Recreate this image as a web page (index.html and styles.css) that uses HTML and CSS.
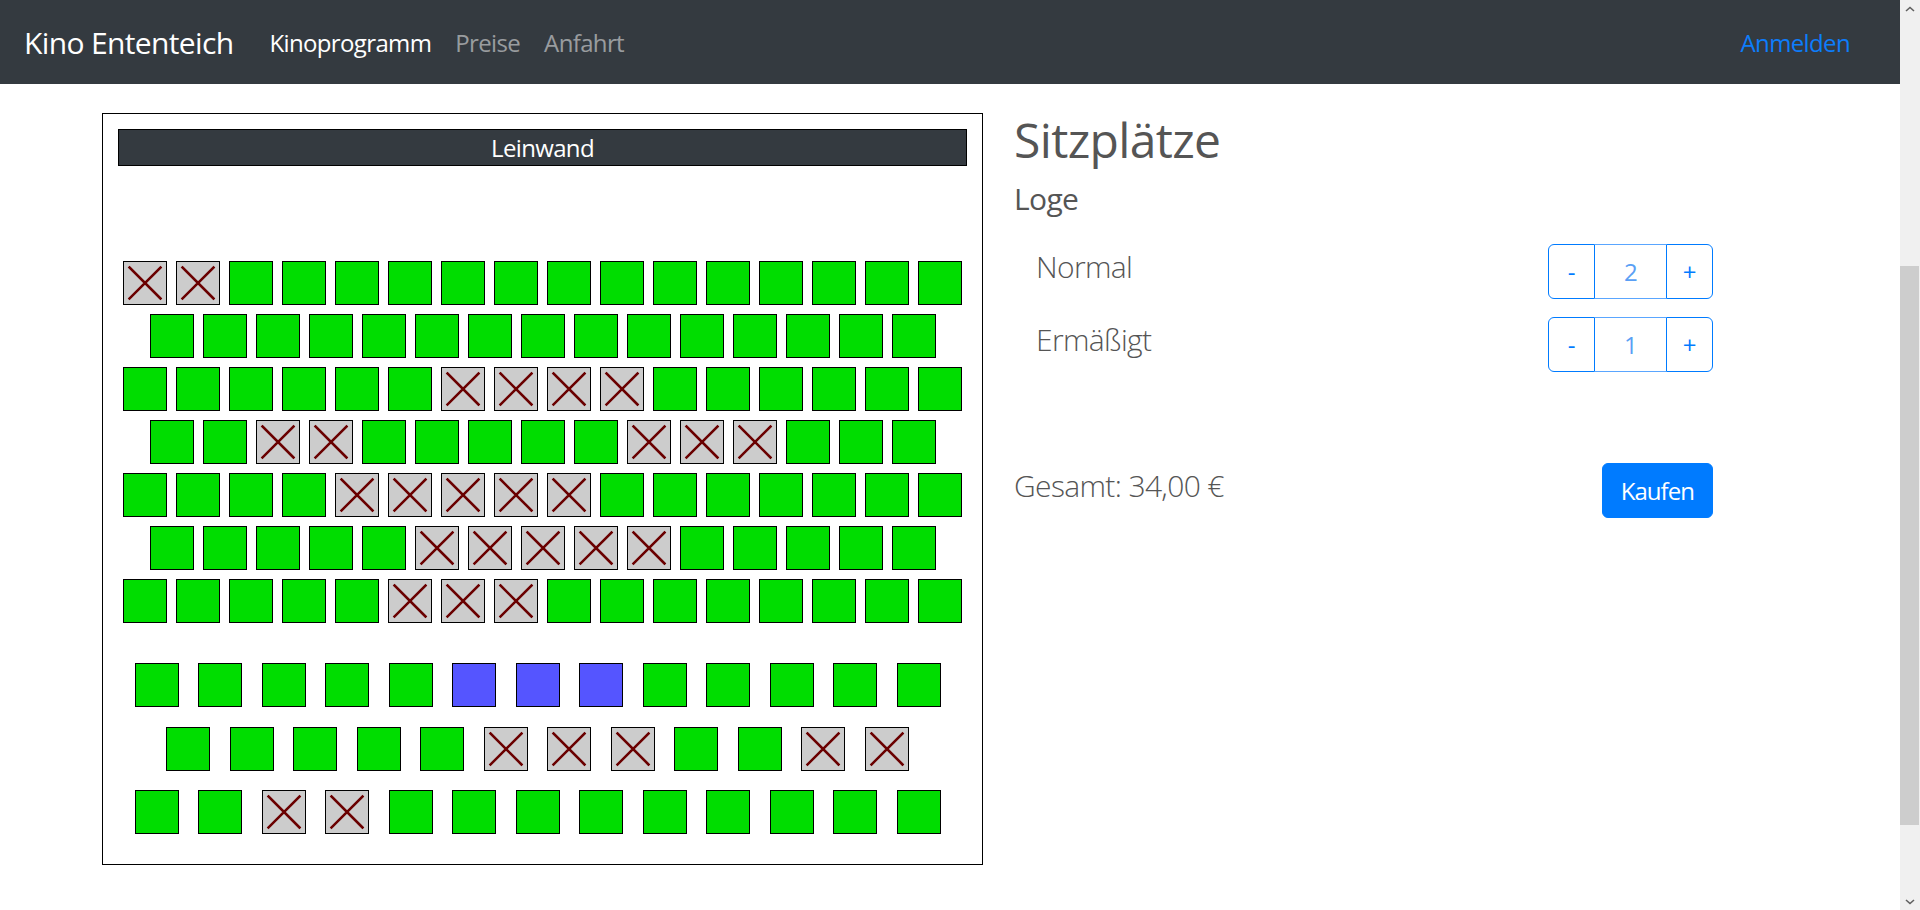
FILE: index.html
```html
<!DOCTYPE html>
<html lang="de">
<head>
<meta charset="utf-8">
<title>Kino Ententeich</title>
<link rel="stylesheet" href="styles.css">
</head>
<body>
<svg class="defs" width="0" height="0" aria-hidden="true">
  <symbol id="xm" viewBox="0 0 42 42"><path d="M5.5 5.5L36.5 36.5M36.5 5.5L5.5 36.5"/></symbol>
</svg>
<div class="page">
  <nav class="navbar">
    <a class="brand">Kino Ententeich</a>
    <a class="nav-link active">Kinoprogramm</a>
    <a class="nav-link">Preise</a>
    <a class="nav-link">Anfahrt</a>
    <a class="nav-login">Anmelden</a>
  </nav>
  <main class="main">
    <section class="plan">
      <div class="screen">Leinwand</div>
      <div class="parkett">
        <div class="prow">
          <span class="seat taken"><svg><use href="#xm"/></svg></span><span class="seat taken"><svg><use href="#xm"/></svg></span><span class="seat"></span><span class="seat"></span><span class="seat"></span><span class="seat"></span><span class="seat"></span><span class="seat"></span><span class="seat"></span><span class="seat"></span><span class="seat"></span><span class="seat"></span><span class="seat"></span><span class="seat"></span><span class="seat"></span><span class="seat"></span>
        </div>
        <div class="prow">
          <span class="seat"></span><span class="seat"></span><span class="seat"></span><span class="seat"></span><span class="seat"></span><span class="seat"></span><span class="seat"></span><span class="seat"></span><span class="seat"></span><span class="seat"></span><span class="seat"></span><span class="seat"></span><span class="seat"></span><span class="seat"></span><span class="seat"></span>
        </div>
        <div class="prow">
          <span class="seat"></span><span class="seat"></span><span class="seat"></span><span class="seat"></span><span class="seat"></span><span class="seat"></span><span class="seat taken"><svg><use href="#xm"/></svg></span><span class="seat taken"><svg><use href="#xm"/></svg></span><span class="seat taken"><svg><use href="#xm"/></svg></span><span class="seat taken"><svg><use href="#xm"/></svg></span><span class="seat"></span><span class="seat"></span><span class="seat"></span><span class="seat"></span><span class="seat"></span><span class="seat"></span>
        </div>
        <div class="prow">
          <span class="seat"></span><span class="seat"></span><span class="seat taken"><svg><use href="#xm"/></svg></span><span class="seat taken"><svg><use href="#xm"/></svg></span><span class="seat"></span><span class="seat"></span><span class="seat"></span><span class="seat"></span><span class="seat"></span><span class="seat taken"><svg><use href="#xm"/></svg></span><span class="seat taken"><svg><use href="#xm"/></svg></span><span class="seat taken"><svg><use href="#xm"/></svg></span><span class="seat"></span><span class="seat"></span><span class="seat"></span>
        </div>
        <div class="prow">
          <span class="seat"></span><span class="seat"></span><span class="seat"></span><span class="seat"></span><span class="seat taken"><svg><use href="#xm"/></svg></span><span class="seat taken"><svg><use href="#xm"/></svg></span><span class="seat taken"><svg><use href="#xm"/></svg></span><span class="seat taken"><svg><use href="#xm"/></svg></span><span class="seat taken"><svg><use href="#xm"/></svg></span><span class="seat"></span><span class="seat"></span><span class="seat"></span><span class="seat"></span><span class="seat"></span><span class="seat"></span><span class="seat"></span>
        </div>
        <div class="prow">
          <span class="seat"></span><span class="seat"></span><span class="seat"></span><span class="seat"></span><span class="seat"></span><span class="seat taken"><svg><use href="#xm"/></svg></span><span class="seat taken"><svg><use href="#xm"/></svg></span><span class="seat taken"><svg><use href="#xm"/></svg></span><span class="seat taken"><svg><use href="#xm"/></svg></span><span class="seat taken"><svg><use href="#xm"/></svg></span><span class="seat"></span><span class="seat"></span><span class="seat"></span><span class="seat"></span><span class="seat"></span>
        </div>
        <div class="prow">
          <span class="seat"></span><span class="seat"></span><span class="seat"></span><span class="seat"></span><span class="seat"></span><span class="seat taken"><svg><use href="#xm"/></svg></span><span class="seat taken"><svg><use href="#xm"/></svg></span><span class="seat taken"><svg><use href="#xm"/></svg></span><span class="seat"></span><span class="seat"></span><span class="seat"></span><span class="seat"></span><span class="seat"></span><span class="seat"></span><span class="seat"></span><span class="seat"></span>
        </div>
      </div>
      <div class="balcony">
        <div class="brow">
          <span class="seat"></span><span class="seat"></span><span class="seat"></span><span class="seat"></span><span class="seat"></span><span class="seat sel"></span><span class="seat sel"></span><span class="seat sel"></span><span class="seat"></span><span class="seat"></span><span class="seat"></span><span class="seat"></span><span class="seat"></span>
        </div>
        <div class="brow">
          <span class="seat"></span><span class="seat"></span><span class="seat"></span><span class="seat"></span><span class="seat"></span><span class="seat taken"><svg><use href="#xm"/></svg></span><span class="seat taken"><svg><use href="#xm"/></svg></span><span class="seat taken"><svg><use href="#xm"/></svg></span><span class="seat"></span><span class="seat"></span><span class="seat taken"><svg><use href="#xm"/></svg></span><span class="seat taken"><svg><use href="#xm"/></svg></span>
        </div>
        <div class="brow">
          <span class="seat"></span><span class="seat"></span><span class="seat taken"><svg><use href="#xm"/></svg></span><span class="seat taken"><svg><use href="#xm"/></svg></span><span class="seat"></span><span class="seat"></span><span class="seat"></span><span class="seat"></span><span class="seat"></span><span class="seat"></span><span class="seat"></span><span class="seat"></span><span class="seat"></span>
        </div>
      </div>
    </section>
    <section class="order">
      <h2 class="title">Sitzplätze</h2>
      <h5 class="category">Loge</h5>
      <div class="qty-row">
        <span class="lead">Normal</span>
        <div class="qty">
          <button class="qty-btn">-</button>
          <span class="qty-val">2</span>
          <button class="qty-btn">+</button>
        </div>
      </div>
      <div class="qty-row">
        <span class="lead">Ermäßigt</span>
        <div class="qty">
          <button class="qty-btn">-</button>
          <span class="qty-val">1</span>
          <button class="qty-btn">+</button>
        </div>
      </div>
      <div class="total-row">
        <span class="lead total">Gesamt: 34,00 €</span>
        <button class="buy">Kaufen</button>
      </div>
    </section>
  </main>
</div>
<div class="scrollbar">
  <div class="sb-btn"><svg width="10" height="6" viewBox="0 0 10 6"><path d="M1 5L5 1.5L9 5"/></svg></div>
  <div class="sb-track"><div class="sb-thumb"></div></div>
  <div class="sb-btn"><svg width="10" height="6" viewBox="0 0 10 6"><path d="M1 1L5 4.5L9 1"/></svg></div>
</div>
</body>
</html>
```

FILE: styles.css
```css
* { box-sizing: border-box; }

html, body { margin: 0; padding: 0; }

body {
  width: 1920px;
  height: 910px;
  overflow: hidden;
  display: flex;
  background: #fff;
  font-family: "Open Sans", "Noto Sans", sans-serif;
  color: #555;
  letter-spacing: -0.04em;
}

.defs { position: absolute; }

.page { flex: 1; min-width: 0; }

/* navbar */
.navbar {
  height: 84px;
  background: #343a40;
  display: flex;
  align-items: center;
  padding: 0 24px;
}
.brand { font-size: 30px; color: #fff; margin-right: 24px; }
.nav-link { font-size: 24px; padding: 0 12px; color: rgba(255,255,255,.5); }
.nav-link.active { color: #fff; }
.nav-login { margin-left: auto; font-size: 24px; color: #0d7dfb; padding-right: 26px; }

/* main */
.main {
  display: flex;
  gap: 31px;
  padding: 29px 0 0 102px;
}

.plan {
  width: 881px;
  height: 752px;
  border: 1px solid #000;
  padding: 15px;
  display: flex;
  flex-direction: column;
}
.screen {
  height: 37px;
  border: 1px solid #000;
  background: #343a40;
  color: #fff;
  text-align: center;
  font-size: 24px;
  line-height: 36px;
}
.parkett {
  margin-top: 95px;
  display: flex;
  flex-direction: column;
  gap: 9px;
}
.prow { display: flex; justify-content: center; gap: 9px; }
.balcony {
  margin-top: 40px;
  padding-right: 10px;
  display: flex;
  flex-direction: column;
  gap: 19.5px;
}
.brow { display: flex; justify-content: center; gap: 19.5px; }

.seat {
  width: 44px;
  height: 44px;
  flex: none;
  border: 1px solid #000;
  background: #00dd00;
  display: block;
}
.seat.taken { background: #cccccc; }
.seat.sel { background: #5555ff; }
.seat svg {
  display: block;
  width: 42px;
  height: 42px;
  stroke: #6a0000;
  stroke-width: 2.5;
  stroke-linecap: square;
  fill: none;
}

/* order column */
.order { width: 699px; }
.title {
  font-size: 48px;
  font-weight: 400;
  line-height: 1.2;
  margin: -2px 0 12px;
}
.category {
  font-size: 30px;
  font-weight: 500;
  line-height: 1.2;
  margin: 0 0 27.5px;
}
.lead { font-size: 30px; font-weight: 300; line-height: 45px; }
.qty-row {
  display: flex;
  justify-content: space-between;
  align-items: flex-start;
  padding-left: 22px;
  margin-bottom: 18px;
}
.qty { display: flex; height: 55px; }
.qty-btn {
  width: 47px;
  height: 55px;
  border: 1px solid #007bff;
  background: #fff;
  color: #007bff;
  font-family: inherit;
  font-size: 24px;
  padding: 0;
}
.qty-btn:first-child { border-radius: 6px 0 0 6px; }
.qty-btn:last-child { border-radius: 0 6px 6px 0; }
.qty-val {
  width: 71px;
  height: 55px;
  border-top: 1px solid #5aa6ff;
  border-bottom: 1px solid #5aa6ff;
  color: #5a9ff5;
  font-size: 24px;
  display: flex;
  align-items: center;
  justify-content: center;
}
.total-row {
  display: flex;
  justify-content: space-between;
  align-items: flex-start;
  margin-top: 91px;
}
.buy {
  height: 55px;
  padding: 0 18px;
  border: 1px solid #007bff;
  background: #007bff;
  color: #fff;
  font-family: inherit;
  font-size: 24px;
  border-radius: 6px;
  letter-spacing: -0.04em;
}

/* scrollbar */
.scrollbar {
  width: 20px;
  height: 910px;
  background: #f0f0f0;
  display: flex;
  flex-direction: column;
}
.sb-btn {
  height: 17px;
  display: flex;
  align-items: center;
  justify-content: center;
}
.sb-btn svg { fill: none; stroke: #606060; stroke-width: 1.6; }
.sb-track { flex: 1; padding-top: 249px; }
.sb-thumb { height: 559px; width: 19px; background: #cdcdcd; }
```
